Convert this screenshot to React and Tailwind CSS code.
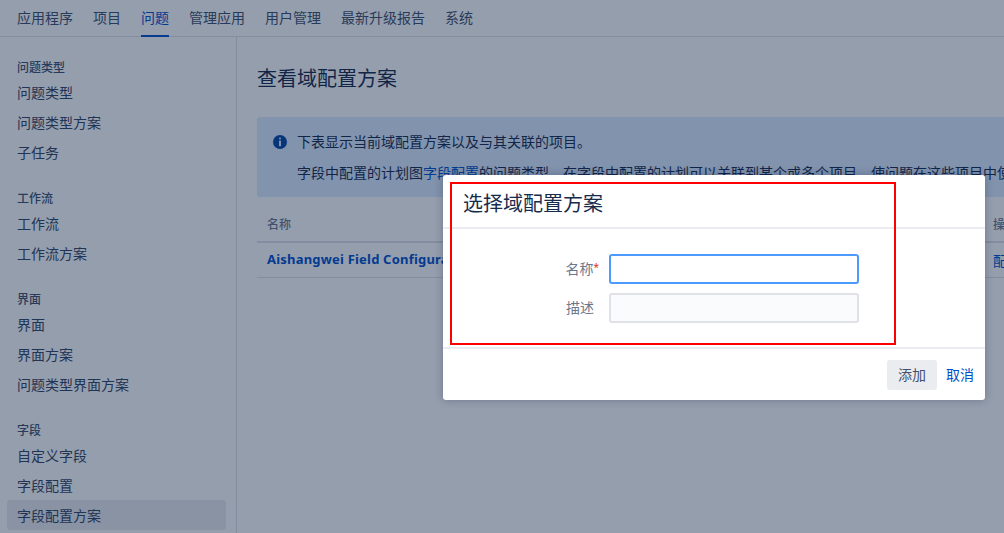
import React from "react";

const font = { fontFamily: '"Noto Sans", "Noto Sans CJK SC", sans-serif' };

const nav = ["应用程序", "项目", "问题", "管理应用", "用户管理", "最新升级报告", "系统"];
const groups = [
  { title: "问题类型", items: ["问题类型", "问题类型方案", "子任务"] },
  { title: "工作流", items: ["工作流", "工作流方案"] },
  { title: "界面", items: ["界面", "界面方案", "问题类型界面方案"] },
  { title: "字段", items: ["自定义字段", "字段配置", "字段配置方案"] },
];

function InfoIcon() {
  return (
    <svg width="14" height="14" viewBox="0 0 14 14" className="shrink-0">
      <circle cx="7" cy="7" r="7" fill="#0747a6" />
      <rect x="6" y="2.6" width="2" height="2" rx="1" fill="#dfe7f5" />
      <rect x="6" y="5.6" width="2" height="5.6" fill="#dfe7f5" />
    </svg>
  );
}

export default function App() {
  return (
    <div className="relative h-[533px] w-[1004px] overflow-hidden bg-white text-[14px] text-[#172b4d]" style={font}>
      <nav className="flex h-[37px] gap-[20px] border-b border-[#dfe1e6] pl-[17px]">
        {nav.map((n) => (
          <div
            key={n}
            className={
              "flex h-[37px] items-center whitespace-nowrap border-b-2 leading-none " +
              (n === "问题" ? "border-[#0052cc] text-[#0052cc]" : "border-transparent text-[#42526e]")
            }
          >
            <span>{n}</span>
          </div>
        ))}
      </nav>

      <div className="flex h-[496px]">
        <aside className="w-[237px] shrink-0 border-r border-[#dfe1e6] pl-[7px] pr-[10px] pt-[23px]">
          {groups.map((g) => (
            <div key={g.title} className="mb-[24px]">
              <div className="mb-[1px] h-[16px] pl-[10px] text-[12px] font-medium leading-[16px] text-[#42526e]">{g.title}</div>
              {g.items.map((it) => (
                <div
                  key={it}
                  className={
                    "flex h-[30px] items-center rounded-[3px] pl-[10px] text-[#344563] " +
                    (it === "字段配置方案" ? "bg-[#ebecf0]" : "")
                  }
                >
                  {it}
                </div>
              ))}
            </div>
          ))}
        </aside>

        <main className="min-w-0 flex-1 overflow-hidden pl-[20px] pt-[27px]">
          <h1 className="h-[30px] text-[20px] font-normal leading-[30px]">查看域配置方案</h1>
          <div className="mt-[23px] h-[80px] w-[900px] rounded-[3px] bg-[#deebff] pl-[16px] pt-[15px]">
            <div className="flex h-[20px] items-center gap-[10px] leading-[20px]">
              <InfoIcon />
              <span>下表显示当前域配置方案以及与其关联的项目。</span>
            </div>
            <p className="mt-[10px] whitespace-nowrap pl-[24px] leading-[22px]">
              字段中配置的计划图<span className="text-[#0052cc]">字段配置</span>的问题类型，在字段中配置的计划可以关联到某个或多个项目，使问题在这些项目中使用。
            </p>
          </div>
          <div className="mt-[12px] w-[900px] whitespace-nowrap text-[12px]">
            <div className="flex h-[34px] items-center border-b-2 border-[#dfe1e6] px-[10px] font-medium text-[#6b778c]">
              <span className="w-[726px]">名称</span>
              <span>操作</span>
            </div>
            <div className="flex h-[35px] items-center border-b border-[#dfe1e6] px-[10px]">
              <span className="w-[726px] text-[13px] font-bold tracking-[0.2px] text-[#0052cc]">Aishangwei Field Configuration</span>
              <span className="text-[14px] text-[#0052cc]">配置</span>
            </div>
          </div>
        </main>
      </div>

      <div className="absolute inset-0 bg-[rgba(9,30,66,0.43)]" />

      <div className="absolute left-[443px] top-[175px] flex h-[225px] w-[542px] flex-col rounded-[3px] bg-white shadow-[0_0_8px_rgba(9,30,66,0.3)]">
        <header className="flex h-[54px] items-center border-b-2 border-[#ebecf0] pl-[20px] pt-[6px] text-[20px] leading-none">
          <span>选择域配置方案</span>
        </header>
        <div className="h-[120px] border-b-2 border-[#ebecf0] pt-[25px]">
          <div className="flex h-[30px] items-center">
            <label className="relative -top-px w-[156px] text-right text-[#6b778c]">
              名称<span className="relative -top-[3px] text-[10px] text-[#de350b]">*</span>
            </label>
            <input className="ml-[10px] h-[30px] w-[250px] rounded-[3px] border-2 border-[#4c9aff] bg-white outline-none" />
          </div>
          <div className="mt-[9px] flex h-[30px] items-center">
            <label className="relative -top-px w-[151px] text-right text-[#6b778c]">描述</label>
            <input className="ml-[15px] h-[30px] w-[250px] rounded-[3px] border-2 border-[#dfe1e6] bg-[#fafbfc] outline-none" />
          </div>
        </div>
        <footer className="flex flex-1 items-center justify-end gap-[9px] pr-[11px]">
          <button className="h-[30px] w-[50px] rounded-[3px] bg-[#ebecf0] text-[#42526e]">添加</button>
          <a className="text-[#0052cc]">取消</a>
        </footer>
      </div>

      <div className="pointer-events-none absolute left-[450px] top-[182px] h-[163px] w-[446px] border-2 border-[#ff0000]" />
    </div>
  );
}
